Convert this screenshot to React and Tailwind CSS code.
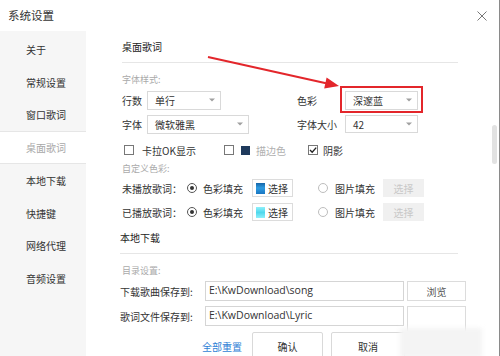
import React from 'react'

const font = { fontFamily: '"Noto Sans CJK SC", "Noto Sans", sans-serif' }
const latin = { fontFamily: '"Open Sans", "Noto Sans CJK SC", sans-serif' }

const navItems = ['关于', '常规设置', '窗口歌词', '桌面歌词', '本地下载', '快捷键', '网络代理', '音频设置']

const Caret = () => (
  <svg width="6" height="4" viewBox="0 0 6 4" className="absolute right-[5px] top-1/2 -translate-y-1/2">
    <path d="M0 0.5 L6 0.5 L3 3.5 Z" fill="#a0a0a0" />
  </svg>
)

const Select = ({ value, className = '' }) => (
  <div className={`relative shrink-0 flex items-center border border-[#d9d9d9] bg-white pl-[7px] text-[10px] text-[#333] ${className}`}>
    {value}
    <Caret />
  </div>
)

const Checkbox = ({ checked }) => (
  <div className="relative w-[10px] h-[10px] border border-[#777] bg-white shrink-0">
    {checked && (
      <svg width="10" height="10" viewBox="0 0 10 10" className="absolute -left-[1px] -top-[1px]">
        <path d="M2 5 L4.2 7.2 L8.2 2.6" stroke="#222" strokeWidth="1.4" fill="none" />
      </svg>
    )}
  </div>
)

const Radio = ({ checked }) => (
  <div className={`w-[10px] h-[10px] rounded-full border flex items-center justify-center shrink-0 ${checked ? 'border-[#555]' : 'border-[#bdbdbd]'}`}>
    {checked && <div className="w-[4px] h-[4px] rounded-full bg-[#333]" />}
  </div>
)

const ColorButton = ({ swatch }) => (
  <div className="shrink-0 w-[41px] h-[18px] border border-[#dcdcdc] bg-white flex items-center pl-[3px] gap-[3px] text-[10px] text-[#333]">
    <div className={`w-[9px] h-[11px] ${swatch}`} />
    选择
  </div>
)

const FillRow = ({ label, swatch, className = '' }) => (
  <div className={`flex items-center h-[20px] text-[10px] text-[#333] ${className}`}>
    <div className="w-[65px] shrink-0">{label}</div>
    <div className="w-[65px] shrink-0 flex items-center">
      <Radio checked />
      <span className="ml-[6px]">色彩填充</span>
    </div>
    <ColorButton swatch={swatch} />
    <div className="ml-[25px] w-[65px] shrink-0 flex items-center">
      <Radio />
      <span className="ml-[7px]">图片填充</span>
    </div>
    <div className="shrink-0 w-[41px] h-[18px] bg-[#f0f0f0] flex items-center justify-center text-[10px] text-[#c8c8c8]">选择</div>
  </div>
)

export default function App() {
  return (
    <div className="relative w-[500px] h-[356px] bg-white overflow-hidden border-r border-[#8a8a8a]" style={font}>
      <div className="h-[31px] flex items-center justify-between pl-[8px] pr-[12px]">
        <span className="text-[11.5px] text-[#333]">系统设置</span>
        <svg width="10" height="10" viewBox="0 0 10 10">
          <path d="M0.5 0.5 L9.5 9.5 M9.5 0.5 L0.5 9.5" stroke="#777" strokeWidth="1" />
        </svg>
      </div>

      <div className="flex h-[325px]">
        <div className="w-[86px] shrink-0 bg-[#f6f6f6] pt-[2px]">
          {navItems.map((item, i) => (
            <div
              key={item}
              className={`h-[32.75px] flex items-center pl-[26px] text-[10px] ${i === 3 ? 'bg-white text-[#a8a8a8] border-y border-[#e6e6e6]' : 'text-[#333]'}`}
            >
              {item}
            </div>
          ))}
        </div>

        <div className="flex-1 pl-[36px]">
          <div className="w-[336px]">
            <div className="h-[32px] flex items-center border-b border-[#e6e6e6] text-[10px] text-[#222]">桌面歌词</div>

            <div className="mt-[7px] h-[20px] flex items-center text-[9px] text-[#aaa]">字体样式:</div>

            <div className="h-[20px] flex items-center text-[10px] text-[#333]">
              <div className="w-[175px] shrink-0 flex items-center">
                <span className="w-[25px]">行数</span>
                <Select value="单行" className="w-[74px] h-[19px]" />
              </div>
              <span className="w-[48px] shrink-0">色彩</span>
              <div className="relative">
                <Select value="深邃蓝" className="w-[73px] h-[19px]" />
                <div className="absolute -top-[5px] -left-[5px] -right-[5px] -bottom-[3px] border-2 border-[#e3262b]" />
              </div>
            </div>

            <div className="mt-[4px] h-[20px] flex items-center text-[10px] text-[#333]">
              <div className="w-[175px] shrink-0 flex items-center">
                <span className="w-[25px]">字体</span>
                <Select value="微软雅黑" className="w-[102px] h-[19px]" />
              </div>
              <span className="w-[48px] shrink-0">字体大小</span>
              <Select value="42" className="w-[73px] h-[18px]" />
            </div>

            <div className="mt-[6px] h-[20px] flex items-center text-[10px] text-[#333]">
              <div className="w-[102px] shrink-0 flex items-center pl-[2px]">
                <Checkbox />
                <span className="ml-[8px]">卡拉OK显示</span>
              </div>
              <div className="w-[84px] shrink-0 flex items-center">
                <Checkbox />
                <div className="ml-[7px] w-[9px] h-[9px] bg-[#1f3a5c]" />
                <span className="ml-[6px] text-[#b0b0b0]">描边色</span>
              </div>
              <div className="flex items-center">
                <Checkbox checked />
                <span className="ml-[5px]">阴影</span>
              </div>
            </div>

            <div className="h-[18px] flex items-center text-[9px] text-[#aaa]">自定义色彩:</div>

            <FillRow label="未播放歌词：" swatch="bg-[linear-gradient(#1565a8,#2e9be0_45%,#1976c2)]" />
            <FillRow label="已播放歌词：" swatch="bg-[linear-gradient(#8ff0fb,#4fd8ec_50%,#8ff0fb)]" className="mt-[4px]" />

            <div className="h-[32px] flex items-center border-b border-[#e6e6e6] text-[10px] text-[#222] -ml-[2px]">本地下载</div>

            <div className="mt-[8px] h-[18px] flex items-center text-[9px] text-[#aaa]">目录设置:</div>

            <div className="mt-[1px] h-[20px] flex items-center text-[10px] text-[#333]">
              <span className="w-[85px] shrink-0 -ml-[2px]">下载歌曲保存到:</span>
              <div className="w-[199px] shrink-0 h-[20px] border border-[#d5d5d5] flex items-center pl-[3px] text-[10.5px] text-[#333]" style={latin}>E:\KwDownload\song</div>
              <div className="ml-[3px] shrink-0 w-[59px] h-[20px] border border-[#dcdcdc] flex items-center justify-center text-[10px] text-[#555]">浏览</div>
            </div>

            <div className="mt-[5px] h-[20px] flex items-start text-[10px] text-[#333]">
              <span className="w-[85px] shrink-0 -ml-[2px] h-[20px] flex items-center">歌词文件保存到:</span>
              <div className="w-[199px] shrink-0 h-[20px] border border-[#d5d5d5] flex items-center pl-[3px] text-[10.5px] text-[#333]" style={latin}>E:\KwDownload\Lyric</div>
              <div className="ml-[3px] shrink-0 w-[59px] h-[26px] border border-[#dcdcdc]" />
            </div>

            <div className="mt-[6px] h-[28px] flex items-center text-[10px]">
              <span className="ml-[80px] shrink-0 text-[#2f7fd6]">全部重置</span>
              <div className="ml-[10px] shrink-0 w-[71px] h-[28px] border border-[#d9d9d9] rounded-[2px] flex items-center justify-center text-[#333]">确认</div>
              <div className="ml-[8px] shrink-0 w-[74px] h-[28px] border border-[#d9d9d9] rounded-[2px] flex items-center justify-center text-[#333]">取消</div>
            </div>
          </div>
        </div>
      </div>

      <div className="absolute left-[492px] top-[125px] w-[5px] h-[39px] rounded-full bg-[#e2e2e2]" />

      <div className="absolute left-[400px] top-[328px] w-[82px] h-[30px] bg-[#f4f4f4] blur-[2px]" />

      <svg width="500" height="356" className="absolute inset-0 pointer-events-none">
        <line x1="208" y1="57" x2="326" y2="83.2" stroke="#e3262b" strokeWidth="2" />
        <polygon points="339,86 324.2,88.5 326.6,77.6" fill="#e3262b" />
      </svg>
    </div>
  )
}
